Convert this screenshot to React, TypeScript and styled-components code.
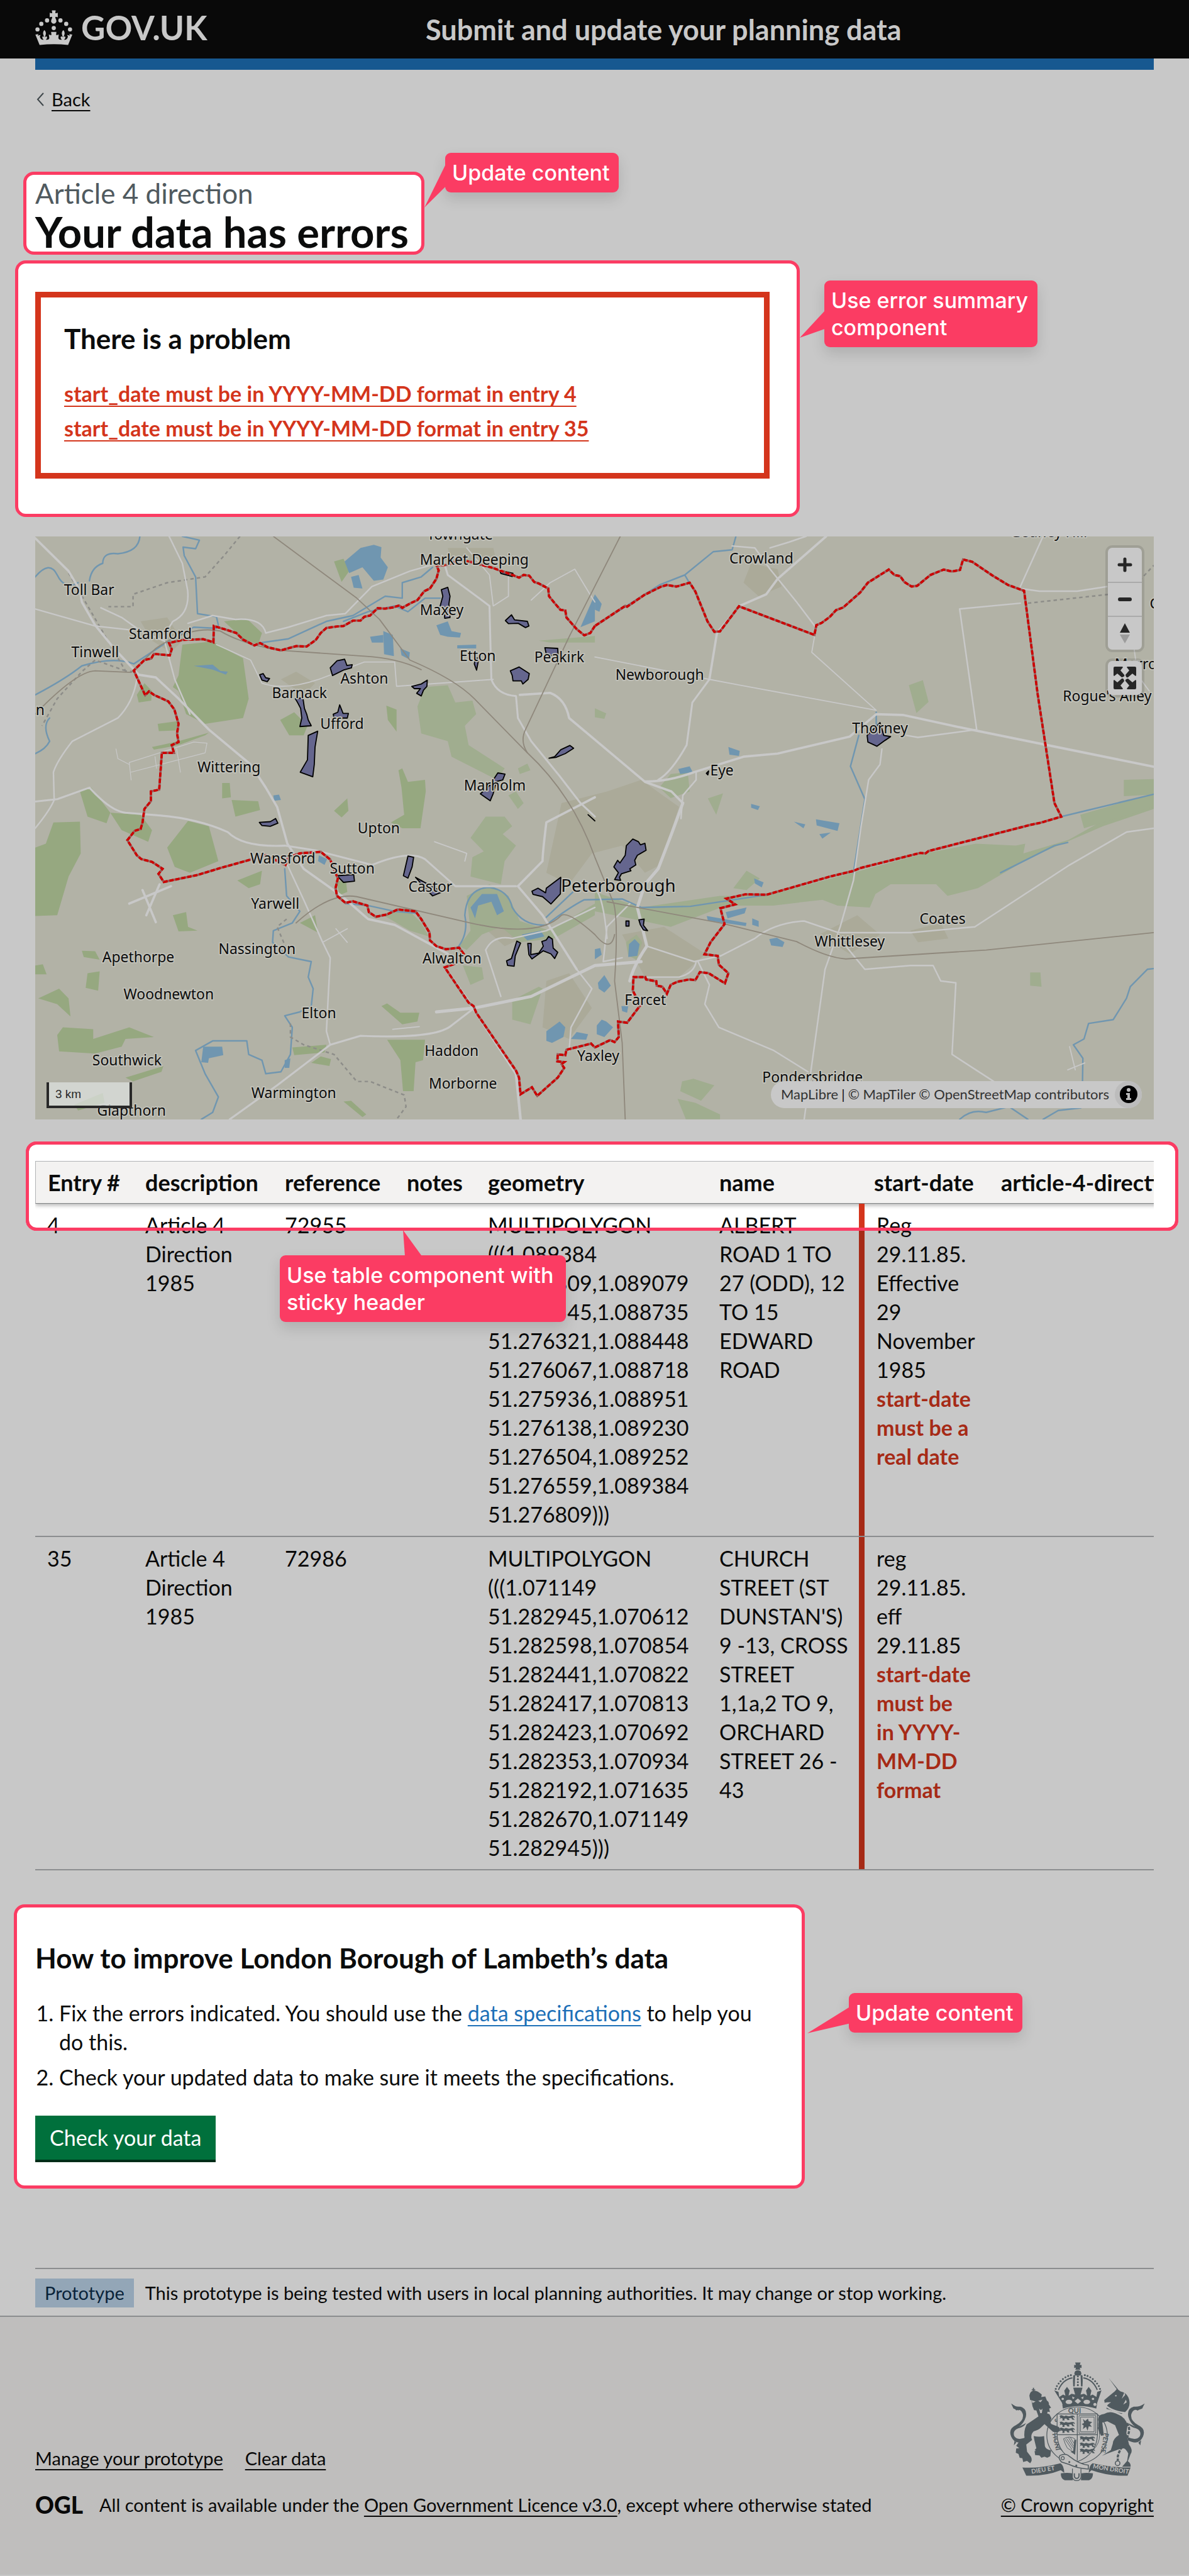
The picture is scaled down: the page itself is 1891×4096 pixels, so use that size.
import React from "react";
import styled, { createGlobalStyle } from "styled-components";

const color = {
  page: "#c8c8c8",
  ink: "#090909",
  inkBright: "#0b0c0c",
  rule: "#8b8d8f",
  footer: "#bfbebd",
  pink: "#fb3c63",
  error: "#d4351c",
  errorDim: "#a62a16",
  grey: "#505a5f",
};

const GlobalStyle = createGlobalStyle`
  * { box-sizing: border-box; }
  body {
    margin: 0;
    background: ${color.page};
    color: ${color.ink};
    font-family: Lato, "Liberation Sans", sans-serif;
    font-size: 34px;
    line-height: 46px;
  }
`;

const Container = styled.div`
  margin: 0 56px;
`;

/* ---------- Header ---------- */

const HeaderBar = styled.header`
  background: ${color.ink};
  color: ${color.page};
`;

const HeaderInner = styled(Container)`
  display: grid;
  grid-template-columns: 621px 1fr;
  align-items: center;
  height: 93px;
`;

const LogoLink = styled.a`
  display: flex;
  align-items: center;
  gap: 14px;
  padding-bottom: 6px;
  color: inherit;
  text-decoration: none;
  font-size: 53px;
  line-height: 56px;
  font-weight: 700;
`;

const ServiceName = styled.a`
  color: inherit;
  text-decoration: none;
  font-size: 45px;
  font-weight: 700;
  line-height: 56px;
`;

const BlueBar = styled(Container)`
  height: 18px;
  background: #175890;
`;

/* ---------- Shared text ---------- */

const TextLink = styled.a`
  color: inherit;
  text-decoration: underline;
  text-decoration-thickness: 2px;
  text-underline-offset: 6px;
`;

const BackRow = styled.nav`
  display: flex;
  align-items: center;
  gap: 12px;
  margin: 27px 0 96px 2px;
  font-size: 29px;
  line-height: 39px;
`;

const SectionHeading = styled.h2`
  margin: 0 0 37px;
  font-size: 44px;
  line-height: 56px;
  font-weight: 700;
`;

/* ---------- Annotations ---------- */

const Highlight = styled.section`
  position: relative;
  background: #fff;
  color: ${color.inkBright};
  border: 5px solid ${color.pink};
  border-radius: 17px;
`;

const TitleHighlight = styled(Highlight)`
  width: 638px;
  margin-left: -19px;
  padding: 0 0 0 14px;
`;

const ErrorHighlight = styled(Highlight)`
  width: 1248px;
  margin: 9px 0 31px -32px;
  padding: 45px 43px 56px 27px;
`;

const AdviceHighlight = styled(Highlight)`
  width: 1258px;
  margin: 54px 0 126px -34px;
  padding: 52px 60px 37px 29px;
`;

const Note = styled.aside<{ $left: string; $top: string; $width: number }>`
  position: absolute;
  z-index: 3;
  left: ${(p) => p.$left};
  top: ${(p) => p.$top};
  width: ${(p) => p.$width}px;
  padding: 10px 0 10px 11px;
  border-radius: 9px;
  background: ${color.pink};
  color: #fff;
  font-family: Inter, "Liberation Sans", sans-serif;
  font-size: 34px;
  font-weight: 500;
  line-height: 43px;
  box-shadow: 0 10px 22px rgba(0, 0, 0, 0.13);
`;

const SideTail = styled.i<{ $width: number; $top: number; $height: number; $shape: string }>`
  position: absolute;
  right: 100%;
  top: ${(p) => p.$top}px;
  width: ${(p) => p.$width}px;
  height: ${(p) => p.$height}px;
  background: ${color.pink};
  clip-path: polygon(${(p) => p.$shape});
`;

const TopTail = styled.i`
  position: absolute;
  left: 196px;
  bottom: 100%;
  width: 29px;
  height: 40px;
  background: ${color.pink};
  clip-path: polygon(0 0, 100% 100%, 10% 100%);
`;

/* ---------- Title and error summary ---------- */

const Caption = styled.span`
  display: block;
  color: ${color.grey};
  font-size: 44px;
  line-height: 58px;
`;

const PageTitle = styled.h1`
  margin: 0;
  font-size: 67px;
  line-height: 64px;
  font-weight: 700;
`;

const ErrorSummary = styled.div`
  border: 9px solid ${color.error};
  padding: 37px 37px 48px;
`;

const ErrorList = styled.ul`
  display: grid;
  gap: 9px;
  margin: 0;
  padding: 0;
  list-style: none;
  color: ${color.error};
  font-weight: 700;
`;

/* ---------- Map ---------- */

const MapFrame = styled.section`
  position: relative;
  margin-bottom: 66px;
  overflow: hidden;
`;

const MapSvg = styled.svg`
  display: block;
  width: 100%;
  height: auto;
  background: #b2b2a6;
`;

const MapControls = styled.div`
  position: absolute;
  top: 18px;
  right: 19px;
  display: grid;
  gap: 18px;
`;

const ControlGroup = styled.div`
  width: 54px;
  border-radius: 7px;
  background: ${color.page};
  box-shadow: 0 0 0 4px rgba(0, 0, 0, 0.1);
`;

const MapButton = styled.button`
  display: grid;
  place-items: center;
  width: 54px;
  height: 54px;
  margin: 0;
  padding: 0;
  border: 0;
  background: none;
  & + & {
    border-top: 2px solid #ababab;
  }
`;

const ScaleBar = styled.div`
  position: absolute;
  left: 18px;
  bottom: 18px;
  width: 136px;
  height: 41px;
  padding-left: 10px;
  border: 4px solid #282828;
  border-top: 0;
  background: rgba(220, 224, 222, 0.75);
  color: #282828;
  font-family: "Liberation Sans", Arial, sans-serif;
  font-size: 19px;
  line-height: 38px;
`;

const Attribution = styled.div`
  position: absolute;
  right: 19px;
  bottom: 18px;
  display: flex;
  align-items: center;
  height: 43px;
  padding-left: 16px;
  border-radius: 22px;
  background: ${color.page};
  color: #111;
  font-size: 22px;
  line-height: 30px;
  gap: 5px;
`;

const CreditLink = styled.a`
  color: #333;
  text-decoration: none;
`;

const InfoButton = styled.button`
  display: grid;
  place-items: center;
  width: 43px;
  height: 43px;
  margin-left: 4px;
  padding: 0;
  border: 0;
  border-radius: 50%;
  background: #bcbcbc;
`;

/* ---------- Table ---------- */

const TableSection = styled.section`
  position: relative;
`;

const RowHighlight = styled.div<{ $frame?: boolean }>`
  position: absolute;
  z-index: ${(p) => (p.$frame ? 2 : 0)};
  top: -31px;
  left: -15px;
  right: -39px;
  height: 142px;
  border: 5px solid ${color.pink};
  border-radius: 17px;
  background: ${(p) => (p.$frame ? "none" : "#fff")};
  pointer-events: none;
`;

const TableScroller = styled.div`
  position: relative;
  z-index: 1;
  overflow: hidden;
`;

const DataTable = styled.table`
  width: 2000px;
  table-layout: fixed;
  border-collapse: separate;
  border-spacing: 0;
  text-align: left;
`;

const HeadRow = styled.tr`
  box-shadow: 0 3px 6px rgba(0, 0, 0, 0.28);
`;

const HeadCell = styled.th<{ $wide?: boolean }>`
  padding: 10px 0 10px ${(p) => (p.$wide ? 24 : 19)}px;
  border-top: 1px solid #b1b4b6;
  border-bottom: 1px solid #808284;
  background: #f3f2f1;
  color: ${color.inkBright};
  font-size: 36px;
  font-weight: 700;
  white-space: nowrap;
  &:first-child {
    border-left: 1px solid #b1b4b6;
  }
`;

const Cell = styled.td`
  padding: 11px 0 11px 19px;
  border-bottom: 2px solid ${color.rule};
  vertical-align: top;
  white-space: pre;
`;

const ErrorCell = styled(Cell)<{ $lit?: boolean }>`
  padding-left: 28px;
  background: linear-gradient(
      ${(p) => (p.$lit ? color.error : color.errorDim)} 38px,
      ${color.errorDim} 38px
    )
    left top / 9px 100% no-repeat border-box;
`;

const CellError = styled.strong`
  display: block;
  color: ${color.errorDim};
  font-weight: 700;
`;

/* ---------- Advice ---------- */

const Steps = styled.ol`
  display: grid;
  gap: 10px;
  margin: 0 0 38px;
  padding-left: 38px;
`;

const SpecLink = styled(TextLink)`
  color: #1d70b8;
`;

const PrimaryButton = styled.button`
  display: block;
  height: 70px;
  margin-bottom: 4px;
  padding: 0 23px;
  border: 0;
  background: #00703c;
  box-shadow: 0 4px 0 #002d18;
  color: #fff;
  font: inherit;
`;

/* ---------- Phase banner and footer ---------- */

const PhaseBanner = styled.div`
  display: flex;
  align-items: center;
  gap: 18px;
  padding: 15px 0 13px;
  border-top: 2px solid ${color.rule};
  font-size: 29px;
`;

const Tag = styled.strong`
  padding: 0 15px;
  background: #93a6b7;
  color: #09233a;
  font-weight: 400;
`;

const Footer = styled.footer`
  border-top: 2px solid ${color.rule};
  background: ${color.footer};
  font-size: 29px;
  line-height: 40px;
`;

const FooterInner = styled(Container)`
  display: flex;
  justify-content: space-between;
  align-items: flex-end;
  padding: 72px 0 91px;
`;

const FooterLinks = styled.div`
  display: flex;
  gap: 35px;
  margin-bottom: 34px;
`;

const Licence = styled.div`
  display: flex;
  align-items: center;
  gap: 26px;
`;

const OglMark = styled.strong`
  width: 76px;
  font-size: 37px;
  font-weight: 900;
`;

const CopyrightLink = styled(TextLink)`
  display: grid;
  justify-items: center;
  gap: 17px;
`;

/* ---------- Drawings ---------- */

const Crown = () => (
  <svg width="59" height="56" viewBox="180 40 192 184" fill="currentColor" aria-hidden="true">
    <path d="M266 42h20l-2 14q6 2 13-2v24q-7-4-13-2q0 8 5 16a14 14 0 1 1-26 0q5-8 5-16q-6-2-13 2V54q7 4 13 2z" />
    <circle cx="276" cy="134" r="11" />
    <circle cx="241" cy="94" r="11" />
    <circle cx="311" cy="94" r="11" />
    <circle cx="211" cy="112" r="11" />
    <circle cx="341" cy="112" r="11" />
    <circle cx="191" cy="141" r="11" />
    <circle cx="361" cy="141" r="11" />
    <path d="M202 222L180 168l16-2-4 8 15-4-4 10q6 18 20 15q-12-12-3-18l6 4q-6-12-6-20q0-10 7-17q8 7 8 17q0 8-5 20l8-4q8 8-3 18q14 3 18-8l-1-6-2-14q7 5 14 3l-2-16h28l-2 16q7 2 14-3l-2 20q4 11 18 8q-11-10-3-18l8 4q-5-12-5-20q0-10 8-17q7 7 7 17q0 8-6 20l6-4q9 6-3 18q14 3 20-15l-4-10 15 4-4-8 16 2-22 54q-74-8-148 0z" />
  </svg>
);

const Beads = ({ points }: { points: number[][] }) => (
  <g>
    {points.map(([x, y]) => (
      <circle key={`${x}-${y}`} cx={x} cy={y} r="5" />
    ))}
  </g>
);

const Lions = ({ x, y }: { x: number; y: number }) => (
  <g transform={`translate(${x} ${y})`}>
    {[0, 33, 64].map((dy) => (
      <path
        key={dy}
        transform={`translate(0 ${dy})`}
        d="M2 4q8-6 14-2l10 4 8-4q14 6 24 2q10-4 18 0q6 4 4 10l-8-6q-4 4 2 10l6 6h-12l-6-9-14 1 6 8-10 2-8-9-10 2 2 8-12 1 2-9-6-4-10 4 4-7z"
      />
    ))}
  </g>
);

const RoyalArms = () => (
  <svg width="216" height="190" viewBox="100 67 700 616" fill={color.grey} role="img" aria-label="Royal arms">
    <path d="M440 69h28l-4 12q8 2 9-1v18q-4-3-9-2l3 10h-26l3-10q-5-1-9 2V80q1 3 9 1z" />
    <path d="M436 128q0-20 18-20t18 20l-6 8h-24z" />
    <path d="M430 136l10-4-2 60h-8q-2-30 0-56zM478 136l-10-4 2 60h8q2-30 0-56z" />
    <Beads points={[[454, 140], [454, 155], [454, 170], [454, 185]]} />
    <Beads points={[[418, 134], [404, 138], [390, 145], [377, 154], [365, 165], [355, 177], [346, 190], [340, 205]]} />
    <Beads points={[[490, 134], [504, 138], [518, 145], [531, 154], [543, 165], [553, 177], [562, 190], [568, 205]]} />
    <path d="M426 148q-50 8-72 62M482 148q50 8 72 62" fill="none" stroke={color.grey} strokeWidth="6" />
    <path d="M332 212l22 8 4 26 20-12 12 6-6-26 14-20 14 20-6 26 16-10 18 4-10-36h48l-10 36 18-4 16 10-6-26 14-20 14 20-6 26 12-6 20 12 4-26 22-8-22 64-5 30q-90-26-172 0l-5-30z" />
    <g fill={color.footer}>
      <path d="M454 254l17 14-17 14-17-14z" />
      <ellipse cx="408" cy="272" rx="17" ry="11" />
      <ellipse cx="500" cy="272" rx="17" ry="11" />
      <circle cx="366" cy="285" r="8" />
      <circle cx="542" cy="285" r="8" />
      <circle cx="376" cy="256" r="6" />
      <circle cx="532" cy="256" r="6" />
      <path d="M424 244l14 6-10 8zM484 244l-14 6 10 8z" />
    </g>
    <ellipse cx="450" cy="444" rx="156" ry="146" fill="none" stroke={color.grey} strokeWidth="4" />
    <ellipse cx="450" cy="444" rx="116" ry="108" fill="none" stroke={color.grey} strokeWidth="3" />
    <g fontFamily="Lato, sans-serif" fontWeight="700" fontSize="34">
      <text x="404" y="331" fontSize="36">QUI</text>
      <text transform="translate(322 436) rotate(78)">HONI</text>
      <text transform="translate(352 384) rotate(-58)">SO</text>
      <text transform="translate(590 430) rotate(100)">PENSE</text>
    </g>
    <path d="M347 334h208v110q-6 100-104 136q-98-36-104-136z" fill={color.footer} stroke={color.grey} strokeWidth="4" />
    <path d="M451 334v240M347 441h208" stroke={color.grey} strokeWidth="4" />
    <Lions x={358} y={340} />
    <Lions x={462} y={448} />
    <g fill="none" stroke={color.grey} strokeWidth="3">
      <path d="M460 342h86v92h-86zM468 350h70v76h-70z" />
      <path d="M380 462q30-18 58 0l-4 70-34-22q-12-20-20-48zM388 464l36 54M396 460l34 50M406 456l26 44M416 456l18 30" />
    </g>
    <path d="M480 360l12 10 14-12 4 14 18 4-12 10 10 14-16-2-6 22-8-20-16 12 4-18-10-8 12-6z" />
    <path d="M436 470l10-4-6 78-24-16 14-4z" />
    <g>
      <path d="M222 199h6v8h6v5h-6v10h-6v-10h-6v-5h6zM204 240q4-24 22-26t42 20l-6 28h-54zM206 256l80-12 8 20q14 10 10 20l12 18-10 4 4 18-12-2-4 18-14-6-6 22-8-14-14 8-12-34-12-2-8-20-6-36z" />
      <path d="M252 346q40-24 56-10l10 20q-10 22 0 30l30 12q16 6 14 22l-14 10-22-4-44-40-20 20q-10 10-36 18q-20 20-8 44l-30 24 4 36 20 26q10 20-4 34l-16-12-20 6-4-20-14-2-6-20-14-6 2-22 16-2-16-12 14-20 30-14q-8-40 10-76z" />
      <path d="M226 448q30 6 54 0l4 52q4 16 32 22l-4 30-16 8-14-6-16 6-10-12-22-2-4-24 10-12-10-40z" />
      <path d="M188 470q-56 30-78-20q-16-40 24-58q44-24 36-58q-10-30-34-18l-24-34q20 18 46 14q36 10 28 52q-10 34-36 52q40-20 36-18q-10 20-40 26q-30 12-20 40q18 26 62 6z" />
      <path d="M110 280l30 20 28 0-20 16-26-10zM128 470l-4 26 12-14z" />
    </g>
    <g fill={color.footer}>
      <path d="M216 264l20 6-16 8zM250 266l22-6-10 14zM254 306q10 14 18 0l-4 24h-8z" />
      <path d="M218 510l20 14-18 4z" />
    </g>
    <g>
      <path d="M614 150l48 58-8-2z" />
      <path d="M590 262l54-44 12-14 18 14q34 6 44 40q10 40-20 66l-20 10-32-14-44-12q-4-20 24-34l-20 0-14 2z" />
      <path d="M560 374q-10-36 30-40q30-20 70 2q40 16 50 56l-6 40 14 60q22 30 8 48l-14 38q16 10 14 28h-44l26-30 6-38q-16-30-28-26l-20 4-60 22-28 12 46-30 10-32q0-26 32-46l-20-50-40-20-26 6 8 66-14 2q-20-30-14-72z" />
      <path d="M712 470q56 30 78-20q16-40-24-58q-44-24-36-58q10-30 34-18l34-34q-30 18-56 14q-36 10-28 52q10 34 36 52q-40-20-36-18q10 20 40 26q30 12 20 40q-18 26-62 6z" />
      <path d="M798 280l-30 20-28 0 20 16 26-10zM780 470l-4 26-10-14z" />
    </g>
    <g fill={color.footer}>
      <circle cx="650" cy="240" r="4" />
      <path d="M694 222l-14 34 18-20zM702 260l-14 26 18-12zM602 290q40 30 94 34l-2 8q-56-6-94-32z" />
    </g>
    <path
      d="M706 382q18 20 10 50t-28 60-28 60v22"
      fill="none"
      stroke={color.grey}
      strokeWidth="11"
      strokeDasharray="16 6"
    />
    <circle cx="659" cy="588" r="12" fill="none" stroke={color.grey} strokeWidth="5" />
    <path d="M168 610q90 6 196-22q18 10 20 50l-18-14q-80 32-178 28zM726 610q-90 2-196-22q-18 10-20 50l14-14q90 32 186 28z" />
    <path d="M366 640q34-4 60 0l2 36h-42q-20-8-20-36zM532 640q-34-4-60 0l-2 36h42q20-8 20-36z" />
    <path
      d="M362 548q30-14 50 6q50 40 96 44v20q-60-4-100-24l-38-12q-20-20-8-34z"
      fill={color.footer}
      stroke={color.grey}
      strokeWidth="5"
    />
    <path d="M426 616v44q4 18 22 18t22-18v-44" fill={color.footer} stroke={color.grey} strokeWidth="4" />
    <path d="M436 640v14q2 12 12 12t12-12v-14" fill="none" stroke={color.grey} strokeWidth="6" />
    <circle cx="376" cy="562" r="8" fill="none" stroke={color.grey} strokeWidth="4" />
    <circle cx="410" cy="582" r="5" />
    <circle cx="446" cy="600" r="5" />
    <g fill={color.footer} fontFamily="Lato, sans-serif" fontWeight="700" fontSize="32">
      <text transform="translate(216 642) rotate(-9)">DIEU ET</text>
      <text transform="translate(530 614) rotate(9)">MON DROIT</text>
    </g>
  </svg>
);

type Label = [string, number, number];

const rowScale = 1.0195;

const westPlaces: Label[] = [
  ["Toll Bar", 234, 181], ["Stamford", 422, 295], ["Tinwell", 250, 343], ["n", 105, 493],
  ["Towngate", 1212, 38], ["Market Deeping", 1250, 103], ["Maxey", 1164, 233], ["Ashton", 960, 411],
  ["Barnack", 789, 449], ["Ufford", 901, 528], ["Etton", 1259, 353], ["Peakirk", 1474, 355],
  ["Wittering", 603, 640], ["Marholm", 1304, 688], ["Upton", 998, 798], ["Wansford", 745, 877],
  ["Sutton", 928, 903], ["Castor", 1134, 950], ["Yarwell", 725, 993], ["Nassington", 677, 1111],
  ["Apethorpe", 364, 1132], ["Woodnewton", 444, 1228], ["Elton", 840, 1276], ["Southwick", 334, 1399],
  ["Glapthorn", 346, 1529], ["Warmington", 774, 1483], ["Haddon", 1190, 1374], ["Morborne", 1220, 1459],
  ["Alwalton", 1191, 1135], ["Yaxley", 1577, 1387],
];

const eastPlaces: Label[] = [
  ["Crowland", 439, 101], ["Newborough", 171, 401], ["Eye", 335, 649], ["Thorney", 752, 540],
  ["Whittlesey", 672, 1091], ["Coates", 917, 1032], ["Farcet", 133, 1243], ["Pondersbridge", 574, 1442],
  ["Rogue's Alley", 1351, 456], ["Murrow", 1441, 374], ["Gedney Hill", 1197, 32],
];

const westWoods = [
  "455,420 470,390 480,310 560,302 600,325 640,345 655,450 640,500 540,515 490,490 470,430",
  "415,515 470,508 462,532 418,534", "400,575 470,560 550,538 540,545 470,570 405,582",
  "590,250 650,243 690,280 680,310 640,295", "360,440 380,410 400,430 398,455 365,460",
  "440,835 495,766 550,780 575,870 500,900 460,885", "210,690 240,680 290,745 280,772 230,755",
  "290,745 370,750 400,790 390,820 320,790", "92,835 120,825 140,770 210,768 212,850 180,910 150,1010 92,1012",
  "625,920 690,895 685,930 655,940", "610,712 680,715 685,738 620,755", "455,1010 490,1002 495,1040 520,1050 470,1052",
  "790,1030 830,1010 838,1055", "215,1102 250,1103 262,1125 220,1118", "230,1160 262,1155 258,1205 225,1198",
  "92,1140 112,1137 122,1163 92,1163", "100,1225 155,1200 180,1225 185,1272 150,1240",
  "165,1300 245,1305 245,1330 340,1300 405,1325 330,1330 320,1350 250,1368 155,1362 150,1320",
  "330,1430 430,1400 425,1415 350,1440", "880,740 915,708 918,740 900,757",
  "585,668 605,668 608,705 585,708", "738,505 775,485 810,520 800,545 762,545",
  "1018,468 1045,478 1045,535 1022,505", "880,95 905,88 920,120 900,148",
  "1050,635 1060,630 1075,665 1120,660 1122,690 1108,785 1060,785 1030,770 1065,750 1058,680",
  "1005,1245 1020,1238 1055,1262 1105,1262 1100,1285 1060,1292", "1020,1332 1120,1332 1115,1385 1095,1390 1090,1465 1062,1465 1055,1385",
  "905,1492 925,1490 965,1525 955,1532", "820,1392 845,1375 872,1382 868,1400", "770,1352 860,1345 855,1365 775,1372",
  "195,1500 270,1470 275,1495 205,1515", "885,920 912,925 915,950 895,958",
];

const westParks = [
  "1120,420 1180,415 1200,460 1245,455 1255,490 1225,520 1235,570 1330,630 1310,660 1190,600 1180,560 1110,540 1100,470",
  "1240,810 1280,755 1330,755 1350,780 1325,800 1360,830 1330,870 1320,930 1240,910 1245,860 1275,845",
  "1340,700 1360,690 1380,720 1365,735", "1365,630 1390,618 1398,635 1370,645",
  "1350,1230 1420,1195 1430,1200 1398,1292 1350,1280", "1220,1140 1270,1145 1275,1175 1240,1190",
  "1010,1010 1070,990 1110,1030 1130,1065 1080,1050", "1420,300 1568,288 1568,305 1450,305",
  "1210,1090 1240,1050 1230,960 1290,930 1340,960 1370,1025 1450,1050 1568,980 1568,1010 1460,1070 1370,1080 1320,1040 1270,1060 1230,1100",
];

const eastParks = [
  "0,950 120,990 330,960 453,960 680,900 870,850 1005,825 1110,830 1135,825 1130,850 1250,815 1340,765 1474,700 1474,735 1340,780 1150,860 1010,940 930,960 900,930 780,930 740,955 725,990 640,985 600,970 470,985 345,985 200,1040 0,1000",
  "1280,750 1474,695 1474,730 1290,785", "365,940 400,895 435,915 400,945", "170,680 200,645 245,640 250,690 200,707",
  "828,415 865,402 880,458 848,487", "0,475 30,488 25,502 0,498", "298,708 338,695 320,750",
  "230,1440 260,1433 315,1450 280,1490 225,1465", "218,1485 265,1495 330,1525 330,1538 240,1538",
  "1395,660 1474,658 1474,698 1395,702", "1148,1158 1175,1158 1178,1195 1148,1192", "82,1080 110,1060 125,1080 110,1125 88,1115",
];

const urban = [
  "1480,720 1600,690 1690,660 1790,730 1740,880 1700,900 1640,830 1560,850 1500,930 1440,900",
  "1440,1180 1500,1160 1560,1250 1500,1330 1430,1300", "1640,1060 1750,1040 1860,1110 1790,1170 1700,1170",
  "370,250 440,240 480,300 450,330 400,300", "1180,60 1300,60 1310,100 1190,100",
  "1240,1010 1330,1000 1400,1060 1330,1090", "1980,100 2050,115 2060,160 2000,185 1960,150",
  "2160,1060 2260,1010 2320,1060 2240,1110", "2400,1050 2480,1030 2500,1070 2420,1080", "740,400 780,380 830,410 800,440",
];

const westWater = [
  "908,95 950,60 985,52 1005,58 1003,85 1022,110 1010,142 985,145 955,110 920,125", "925,135 945,130 955,165 932,163",
  "1010,275 1035,285 1038,340 1012,335", "975,290 1010,285 1010,305 980,305", "1055,320 1080,330 1078,348 1058,338",
  "1150,260 1180,250 1190,275 1215,280 1212,292 1180,290 1160,285", "1240,990 1270,955 1310,955 1328,1000 1310,1010 1295,975 1260,985 1252,1018",
  "1205,312 1255,310 1255,320 1205,320", "720,700 735,698 740,712 722,714", "535,1350 585,1350 588,1372 550,1380 548,1392 530,1390",
  "1440,1310 1475,1285 1490,1300 1485,1325 1455,1340 1440,1335", "1505,1330 1520,1312 1550,1318 1545,1332",
  "1530,265 1568,180 1568,250", "1375,1060 1425,1050 1435,1065 1390,1075", "510,365 560,362 580,378 600,380 595,388 560,375",
  "750,1385 765,1380 762,1405 750,1405", "840,855 862,865 855,880 838,870",
];

const eastWater = [
  "0,180 18,205 12,225 0,220", "90,1085 105,1072 118,1085 112,1115 88,1118", "8,1185 25,1165 42,1192 25,1210 10,1200",
  "5,1295 18,1280 30,1285 48,1300 25,1325 5,1318", "0,1098 14,1095 18,1112 0,1124", "460,1072 480,1068 500,1080 495,1092 465,1088",
  "345,1002 400,990 395,1005 350,1018", "295,1012 400,1030 398,1038 298,1024", "415,1018 432,1025 432,1040 415,1035",
  "352,575 382,585 380,598 355,595", "220,632 250,625 258,640 225,645", "412,722 435,728 430,738 412,732",
  "525,768 555,775 550,785", "583,762 645,772 640,792 585,778", "592,800 622,796 600,812", "420,915 445,925 440,938 422,928",
  "70,1245 88,1245 85,1262 72,1258",
];

const westAreas = [
  "1163,168 1180,162 1186,185 1183,205 1186,240 1172,242 1170,215 1160,210 1167,185",
  "1332,248 1348,233 1356,246 1390,250 1394,262 1385,266 1366,255 1340,256",
  "1345,378 1368,368 1395,385 1392,400 1378,412 1374,404 1352,404 1350,390",
  "870,370 888,352 908,348 914,364 928,362 926,370 905,376 876,390",
  "1085,418 1110,412 1126,402 1125,418 1116,428 1110,443 1098,436 1108,424 1092,424",
  "684,388 693,385 700,396 710,398 704,406 690,402", "778,450 798,448 802,475 808,490 812,505 820,520 790,522 795,500 792,475 784,460",
  "812,545 837,534 830,575 828,620 824,652 791,640 810,608", "878,490 890,485 895,466 904,488 918,488 915,500 880,500",
  "683,770 712,768 726,760 732,772 712,780 690,778", "1447,604 1462,600 1478,582 1502,571 1512,578 1490,592 1465,602",
  "1266,696 1290,675 1312,642 1331,645 1325,660 1308,664 1300,695 1292,714", "1063,908 1075,857 1090,860 1086,885 1075,914",
  "888,908 932,905 934,922 905,925", "1402,948 1418,940 1438,952 1440,940 1478,912 1477,955 1452,981 1430,962 1405,956",
  "1335,1128 1348,1122 1362,1077 1372,1082 1358,1115 1355,1142 1338,1140",
  "1391,1083 1400,1083 1399,1112 1420,1108 1432,1090 1428,1078 1440,1074 1446,1065 1456,1072 1458,1095 1470,1106 1462,1122 1452,1110 1432,1102 1402,1123 1394,1112",
  "1317,118 1352,126 1350,134 1320,126", "1095,912 1165,950 1140,960 1120,940", "1436,318 1470,320 1472,360 1462,340 1440,335",
  "1550,750 1568,766", "1253,345 1262,345 1256,376 1250,360",
];

const eastAreas = [
  "83,830 100,813 115,820 120,828 132,824 135,842 112,855 105,868 108,880 92,890 95,895 70,903 65,912 68,920 52,918 62,900 50,885 60,868 66,875 80,855",
  "718,545 752,512 762,545 780,548 765,558 744,573 720,562", "82,1025 90,1025 90,1038 82,1038",
  "116,1022 130,1020 128,1036 139,1050 128,1048 120,1035", "294,643 300,637 298,647",
];

const roads: [string, number][] = [
  ["M92,35 L180,120 210,170 215,200 250,260 300,320 365,388 410,395 470,450 550,530 660,620 700,680 730,730 757,825 800,890 900,960 970,1020 1040,1035 1180,1110", 6],
  ["M92,218 L250,262 370,275 430,300", 4],
  ["M370,275 L320,240 265,215", 4],
  ["M92,785 Q130,740 142,712 L140,640 Q150,610 190,560 L310,500 Q350,460 360,400", 4],
  ["M92,716 L150,710 235,680 Q290,740 330,745 L420,752 Q520,760 600,795 Q640,835 750,830 L830,842 980,880 Q1080,840 1120,865 L1200,935 1360,935", 5],
  ["M445,30 L480,100 494,170 Q500,230 455,250 L430,290 460,400 500,490", 4],
  ["M495,255 L560,235 620,245 Q690,240 700,280 L760,265 860,235 910,230 980,160 1080,120 1170,95", 4],
  ["M570,310 L660,350 690,410 Q750,430 840,400 L960,355 1040,355 1045,418 1300,400", 3],
  ["M1165,80 L1180,130 1290,210 1295,400 Q1310,440 1360,443 L1365,500 1400,560 1475,650 1530,720 1568,755", 5],
  ["M1230,60 L1290,130 1300,210 1340,185 1340,130", 3],
  ["M1370,440 L1450,435 Q1490,450 1500,500 L1568,556 1700,665 1770,690 1800,720", 6],
  ["M1568,705 L1440,770 Q1430,850 1430,870 L1365,935 1430,1010 1520,1150", 6],
  ["M1150,1260 L1250,1250 1400,1220 1568,1140 1690,1130", 8],
  ["M605,1538 L730,1450 870,1345 950,1322 Q1150,1330 1190,1295 L1250,1250", 5],
  ["M757,880 L800,970 850,1080 870,1120 860,1310 870,1345", 4],
  ["M1172,1145 L1240,1240 1360,1420 1372,1538", 7],
  ["M1280,1100 L1320,1220 M1280,1100 Q1300,1060 1350,1070 L1440,1050 1568,990", 4],
  ["M1500,1360 L1505,1300 1560,1200 1520,1150", 4],
  ["M340,980 L450,935 M375,945 L410,1028 M420,930 L385,1010", 6],
  ["M850,1080 L915,1045 M885,1045 L915,1080 M1145,820 L1230,850 1225,870 M1035,1305 L1105,1298", 3],
  ["M345,640 L540,590 545,565 510,562 340,615 345,660 M305,580 L310,605 340,620 M408,600 L412,630 M465,580 L475,640", 2],
  ["M1400,195 L1450,150 1515,115 1555,180 1568,200", 3],
  ["M1640,1120 L1590,1130 1600,1040 1660,980 M1568,940 Q1590,960 1600,1070", 4],
  ["M1700,664 Q1760,665 1830,640 L1960,600 2050,592 2240,548 2310,490 2380,492 2550,528 3042,626", 6],
  ["M1568,342 L1870,400 1950,415 2310,480 2140,330 2148,285", 3],
  ["M1870,400 L1890,280 1950,210 2020,180 2050,140 2178,30", 6],
  ["M1870,400 L1825,460 1810,570 Q1770,640 1735,660", 5],
  ["M2148,262 L2100,200 2030,115 1990,60 1930,55 M2030,60 L2080,45 2125,30", 4],
  ["M1800,720 L1770,800 1735,890 1700,930 1680,990 1705,1090 Q1670,1140 1660,1180", 8],
  ["M1835,640 L1835,660 1800,700 1795,760", 4],
  ["M2530,218 L2690,203 M2530,218 L2575,530 2420,550 2390,545", 4],
  ["M2690,160 L2750,30 M2690,165 L2740,172 2840,172 2918,160", 4],
  ["M2325,580 L2320,620 2290,660 2270,780 2250,920 2215,1040 2175,1150 2120,1538", 4],
  ["M1705,1090 L1830,1130 1900,1115 1990,1070 Q2040,1030 2120,1025 L2210,1055 2400,1055 2570,1040 2820,880 2970,795 3042,785", 4],
  ["M2230,1090 L2280,1150 2400,1140 2460,1140 2480,1180 2520,1185 2510,1370 2620,1440", 4],
  ["M1840,1130 L1870,1190 1858,1240 1895,1300 2040,1360 2130,1415", 4],
  ["M1690,1170 L1790,1170 Q1830,1160 1835,1130", 4],
  ["M2820,1350 L2835,1410 M2815,1410 L2860,1392 M2990,320 L3000,390 3030,430", 3],
];

const rivers = [
  "M92,135 Q130,90 150,130 T205,150 M235,145 Q240,110 270,100 Q270,70 310,75 Q365,70 368,30",
  "M480,30 L525,40 515,62 482,58 485,80 515,135 520,230 570,238 575,260",
  "M92,440 Q170,400 215,365 Q300,340 352,360 L445,300 510,265 570,268",
  "M130,500 Q110,520 130,560 Q120,580 92,592",
  "M690,305 L760,295 860,250 930,235 1015,185 1060,190 1060,150 1110,135 1140,110",
  "M905,250 L970,225 1040,210 1075,225 1120,190 1160,190",
  "M910,980 L970,985 1040,1000 1100,1005",
  "M1205,1095 Q1235,1060 1225,1010 Q1230,940 1290,938 Q1340,945 1350,990 Q1380,1040 1440,1035 Q1500,990 1540,970 L1640,968 1690,990 1820,987 2020,957",
  "M1440,1015 L1510,950 M750,890 L755,960 790,1000 770,1030 720,1050 718,1080 760,1118 820,1130 812,1170 825,1200 820,1245 790,1260 750,1270 770,1300 765,1370 740,1415 700,1420 690,1385 655,1370 650,1335 560,1335 515,1360 540,1420 575,1480 560,1520 530,1538",
  "M1568,262 L1740,155 1805,130 1880,70 1930,65 1940,30 M1805,130 L1820,155",
  "M2310,485 L2310,530 M2264,545 L2242,625 2280,710 2250,900",
  "M2798,755 L3042,697 M2638,900 L2780,830 2815,822",
  "M2854,1440 L2855,1380 2830,1345 2858,1330 2870,1290 2935,1280 2970,1225 2980,1195 3025,1150 3042,1148",
  "M2530,1538 Q2560,1510 2600,1520 L2660,1505 2710,1538 M2750,1538 L2790,1515 2850,1508",
];

const railways = [
  "M720,30 L940,190 1000,245 1080,350 Q1200,400 1250,450 L1390,590 Q1510,700 1568,860 L1618,980 Q1630,1030 1620,1180 L1640,1340 1648,1538",
  "M1390,590 Q1370,560 1385,530 L1500,290 1635,30",
  "M92,490 Q200,380 250,378 L345,382 410,320 Q500,260 580,275 Q640,310 740,325 L960,340 Q1050,345 1110,375",
  "M780,1030 Q870,950 940,962 L1240,1030 Q1420,1070 1480,1010 Q1500,1000 1568,1060 Q1610,1110 1620,1060",
  "M1600,975 L1680,990 1900,1030 2100,1078 Q2180,1120 2230,1123 L2600,1100 3042,1055",
];

const borders = [
  "M632,30 L590,80 540,135 440,150 350,180 350,212 285,212",
  "M180,125 L260,260 330,378 352,380 M330,378 L250,350 215,380 150,450 110,520",
  "M755,1020 L730,1040 760,1110 M765,1290 L765,1325 800,1345 880,1370 940,1440 975,1440 1065,1475 1070,1505 1045,1538",
  "M2710,203 L2925,180 2985,165 3042,105",
];

const boundary =
  "M1568,262 L1556,280 1540,286 1520,270 1493,240 1490,222 1477,220 1462,203 1447,185 1445,165 1420,152 1408,148 1395,132 1380,130 1368,137 1353,131 1300,112 1240,96 1210,92 1180,104 1150,105 1156,118 1150,140 1133,165 1118,172 1100,195 1082,203 1060,215 1052,209 1035,214 1015,217 995,216 975,235 960,238 950,248 930,248 905,262 890,263 860,267 845,280 832,298 808,315 780,314 740,325 705,317 685,306 670,312 640,297 622,280 590,270 563,262 562,304 535,296 480,298 445,306 452,322 447,338 405,334 398,346 380,350 352,377 365,405 382,441 392,431 405,440 443,457 459,478 470,515 466,540 470,562 452,570 458,590 426,590 419,685 397,690 397,715 380,735 375,770 370,787 354,792 335,816 360,855 372,865 400,872 428,890 417,903 431,924 520,906 580,888 657,867 700,855 752,880 760,860 790,850 845,846 870,866 890,915 884,940 888,960 910,978 930,974 968,985 972,1002 990,1014 1020,1008 1048,995 1095,1000 1110,1020 1132,1055 1133,1075 1150,1090 1175,1098 1210,1094 1222,1110 1200,1135 1172,1145 1235,1236 1248,1245 1255,1262 1360,1412 1368,1430 1372,1473 1402,1455 1416,1477 1470,1430 1487,1405 1480,1395 1487,1390 1469,1388 1470,1370 1490,1372 1493,1358 1558,1342 1568,1352 1608,1333 1620,1338 1631,1325 1629,1285 1653,1288 1688,1243 1668,1205 1670,1170 1701,1170 1703,1176 1730,1181 1731,1192 1746,1195 1758,1213 1768,1190 1786,1182 1818,1176 1833,1178 1845,1157 1868,1160 1911,1186 1920,1160 1895,1138 1892,1115 1857,1111 1873,1080 1910,1033 1899,992 1938,982 1915,967 1965,956 2021,957 2188,910 2248,896 2268,888 2426,849 2440,850 2448,844 2718,776 2743,771 2798,755 2780,720 2736,440 2700,171 2658,156 2616,131 2563,96 2539,90 2531,117 2510,121 2488,116 2453,130 2418,158 2403,160 2384,148 2373,133 2358,130 2343,116 2288,150 2268,175 2223,214 2204,221 2188,238 2166,254 2152,260 2147,285 1948,211 1898,276 1883,277 1865,250 1833,173 1818,150 1783,160 1758,156 1743,160 1698,182 1653,212 1648,210z";

const Polygons = ({ items, fill, east }: { items: string[]; fill: string; east?: boolean }) => (
  <g fill={fill} transform={east ? "translate(1568 0)" : undefined}>
    {items.map((points) => (
      <polygon key={points} points={points} />
    ))}
  </g>
);

const Places = ({ items }: { items: Label[] }) => (
  <>
    {items.map(([name, x, y]) => (
      <text key={name} x={x} y={y * rowScale}>
        {name}
      </text>
    ))}
  </>
);

const AreaMap = () => (
  <MapSvg viewBox="92 31 2950 1537" role="img" aria-label="Map of entries around Peterborough">
    <g transform={`scale(1 ${rowScale})`}>
      <Polygons items={urban} fill="#abaa99" />
      <Polygons items={westWoods} fill="#96a880" />
      <Polygons items={westParks} fill="#a0ad8f" />
      <Polygons items={eastParks} fill="#a0ad8f" east />
      <Polygons items={westWater} fill="#7096b0" />
      <Polygons items={eastWater} fill="#7096b0" east />
      <g fill="none" strokeLinejoin="round" strokeLinecap="round">
        {rivers.map((d) => (
          <path key={d} d={d} stroke="#7096b0" strokeWidth="4" />
        ))}
        {borders.map((d) => (
          <path key={d} d={d} stroke="#8d8d89" strokeWidth="4" strokeDasharray="9 8" strokeLinecap="butt" />
        ))}
        {roads.map(([d, width]) => (
          <path key={d} d={d} stroke="#c8c8c8" strokeWidth={width} />
        ))}
        {railways.map((d) => (
          <path key={d} d={d} stroke="#8f887c" strokeWidth="3" />
        ))}
      </g>
      <g stroke="#000" strokeWidth="3" strokeLinejoin="round">
        <Polygons items={westAreas} fill="#65668e" />
        <Polygons items={eastAreas} fill="#65668e" east />
      </g>
      <path d={boundary} fill="none" stroke="#9c5a58" strokeWidth="6" />
      <path d={boundary} fill="none" stroke="#cc0000" strokeWidth="6" strokeDasharray="11 5" />
    </g>
    <g
      fill="#0c0c0c"
      stroke="#c2c2ba"
      strokeWidth="6"
      strokeLinejoin="round"
      paintOrder="stroke"
      textAnchor="middle"
      fontFamily='"Noto Sans", sans-serif'
      fontSize="38"
    >
      <Places items={westPlaces} />
      <text x="1630" y={950 * rowScale} fontSize="46">
        Peterborough
      </text>
      <g transform="translate(1568 0)">
        <Places items={eastPlaces} />
        <text x="1477" y="222">
          G
        </text>
      </g>
    </g>
  </MapSvg>
);

const PlusIcon = () => (
  <svg width="24" height="24" viewBox="0 0 24 24" stroke="#262626" strokeWidth="5" strokeLinecap="round" aria-hidden="true">
    <path d="M12 3v18M3 12h18" />
  </svg>
);

const MinusIcon = () => (
  <svg width="24" height="24" viewBox="0 0 24 24" stroke="#262626" strokeWidth="6" strokeLinecap="round" aria-hidden="true">
    <path d="M4 12h16" />
  </svg>
);

const CompassIcon = () => (
  <svg width="16" height="32" viewBox="0 0 16 32" aria-hidden="true">
    <path d="M8 0l8 15H0z" fill="#262626" />
    <path d="M8 32l8-14H0z" fill="#9c9c9c" />
  </svg>
);

const FullscreenIcon = () => (
  <svg width="36" height="36" viewBox="0 0 36 36" fill="#262626" aria-hidden="true">
    {[0, 90, 180, 270].map((angle) => (
      <path
        key={angle}
        transform={`rotate(${angle} 18 18)`}
        d="M2 0h12l1 1-4 5 6 7q1 2-1 3t-3 1L6 11l-5 4-1-1V2q0-2 2-2z"
      />
    ))}
  </svg>
);

const InfoIcon = () => (
  <svg width="28" height="28" viewBox="0 0 28 28" aria-hidden="true">
    <circle cx="14" cy="14" r="14" fill="#000" />
    <circle cx="14" cy="7" r="3" fill="#bcbcbc" />
    <path d="M10 12h6v8h2v3h-8v-3h2v-5h-2z" fill="#bcbcbc" />
  </svg>
);

/* ---------- Data ---------- */

const columns = [
  { name: "Entry #", width: 156 },
  { name: "description", width: 222 },
  { name: "reference", width: 194 },
  { name: "notes", width: 129 },
  { name: "geometry", width: 368 },
  { name: "name", width: 241 },
  { name: "start-date", width: 202, wide: true },
  { name: "article-4-direction", width: 488, wide: true },
];

const rows = [
  {
    entry: "4",
    reference: "72955",
    geometry:
      "MULTIPOLYGON\n(((1.089384\n51.276809,1.089079\n51.276545,1.088735\n51.276321,1.088448\n51.276067,1.088718\n51.275936,1.088951\n51.276138,1.089230\n51.276504,1.089252\n51.276559,1.089384\n51.276809)))",
    name: "ALBERT\nROAD 1 TO\n27 (ODD), 12\nTO 15\nEDWARD\nROAD",
    date: "Reg\n29.11.85.\nEffective\n29\nNovember\n1985",
    error: "start-date\nmust be a\nreal date",
    lit: true,
  },
  {
    entry: "35",
    reference: "72986",
    geometry:
      "MULTIPOLYGON\n(((1.071149\n51.282945,1.070612\n51.282598,1.070854\n51.282441,1.070822\n51.282417,1.070813\n51.282423,1.070692\n51.282353,1.070934\n51.282192,1.071635\n51.282670,1.071149\n51.282945)))",
    name: "CHURCH\nSTREET (ST\nDUNSTAN'S)\n9 -13, CROSS\nSTREET\n1,1a,2 TO 9,\nORCHARD\nSTREET 26 -\n43",
    date: "reg\n29.11.85.\neff\n29.11.85",
    error: "start-date\nmust be\nin YYYY-\nMM-DD\nformat",
    lit: false,
  },
];

export default function App() {
  return (
    <>
      <GlobalStyle />
      <HeaderBar>
        <HeaderInner>
          <LogoLink href="#">
            <Crown />
            GOV.UK
          </LogoLink>
          <ServiceName href="#">Submit and update your planning data</ServiceName>
        </HeaderInner>
      </HeaderBar>
      <BlueBar />

      <Container as="main">
        <BackRow>
          <svg width="12" height="22" viewBox="0 0 12 22" fill="none" stroke="#3f474b" strokeWidth="2" aria-hidden="true">
            <path d="M11 1L2 11l9 10" />
          </svg>
          <TextLink href="#">Back</TextLink>
        </BackRow>

        <TitleHighlight>
          <Caption>Article 4 direction</Caption>
          <PageTitle>Your data has errors</PageTitle>
          <Note $left="calc(100% + 38px)" $top="-35px" $width={276}>
            Update content
            <SideTail $width={33} $top={20} $height={67} $shape="100% 0, 100% 51%, 0 100%" />
          </Note>
        </TitleHighlight>

        <ErrorHighlight>
          <ErrorSummary role="alert">
            <SectionHeading>There is a problem</SectionHeading>
            <ErrorList>
              <li>
                <TextLink href="#entry-4">start_date must be in YYYY-MM-DD format in entry 4</TextLink>
              </li>
              <li>
                <TextLink href="#entry-35">start_date must be in YYYY-MM-DD format in entry 35</TextLink>
              </li>
            </ErrorList>
          </ErrorSummary>
          <Note $left="calc(100% + 44px)" $top="27px" $width={339}>
            Use error summary component
            <SideTail $width={39} $top={49} $height={42} $shape="100% 0, 100% 67%, 0 100%" />
          </Note>
        </ErrorHighlight>

        <MapFrame>
          <AreaMap />
          <MapControls>
            <ControlGroup>
              <MapButton aria-label="Zoom in"><PlusIcon /></MapButton>
              <MapButton aria-label="Zoom out"><MinusIcon /></MapButton>
              <MapButton aria-label="Reset bearing to north"><CompassIcon /></MapButton>
            </ControlGroup>
            <ControlGroup>
              <MapButton aria-label="Enter fullscreen"><FullscreenIcon /></MapButton>
            </ControlGroup>
          </MapControls>
          <ScaleBar>3 km</ScaleBar>
          <Attribution>
            <CreditLink href="#">MapLibre</CreditLink>
            <span>|</span>
            <CreditLink href="#">© MapTiler</CreditLink>
            <CreditLink href="#">© OpenStreetMap contributors</CreditLink>
            <InfoButton aria-label="Toggle attribution"><InfoIcon /></InfoButton>
          </Attribution>
        </MapFrame>

        <TableSection>
          <RowHighlight />
          <TableScroller>
            <DataTable>
              <colgroup>
                {columns.map((column) => (
                  <col key={column.name} width={column.width} />
                ))}
              </colgroup>
              <thead>
                <HeadRow>
                  {columns.map((column) => (
                    <HeadCell key={column.name} scope="col" $wide={column.wide}>
                      {column.name}
                    </HeadCell>
                  ))}
                </HeadRow>
              </thead>
              <tbody>
                {rows.map((row) => (
                  <tr key={row.entry} id={`entry-${row.entry}`}>
                    <Cell>{row.entry}</Cell>
                    <Cell>{"Article 4\nDirection\n1985"}</Cell>
                    <Cell>{row.reference}</Cell>
                    <Cell />
                    <Cell>{row.geometry}</Cell>
                    <Cell>{row.name}</Cell>
                    <ErrorCell $lit={row.lit}>
                      {row.date}
                      <CellError>{row.error}</CellError>
                    </ErrorCell>
                    <Cell />
                  </tr>
                ))}
              </tbody>
            </DataTable>
          </TableScroller>
          <RowHighlight $frame />
          <Note $left="389px" $top="150px" $width={455}>
            Use table component with sticky header
            <TopTail />
          </Note>
        </TableSection>

        <AdviceHighlight>
          <SectionHeading>How to improve London Borough of Lambeth’s data</SectionHeading>
          <Steps>
            <li>
              Fix the errors indicated. You should use the <SpecLink href="#">data specifications</SpecLink> to help you
              do this.
            </li>
            <li>Check your updated data to make sure it meets the specifications.</li>
          </Steps>
          <PrimaryButton type="button">Check your data</PrimaryButton>
          <Note $left="calc(100% + 75px)" $top="136px" $width={276}>
            Update content
            <SideTail $width={66} $top={23} $height={41} $shape="100% 0, 100% 63%, 0 100%" />
          </Note>
        </AdviceHighlight>

        <PhaseBanner>
          <Tag>Prototype</Tag>
          <span>This prototype is being tested with users in local planning authorities. It may change or stop working.</span>
        </PhaseBanner>
      </Container>

      <Footer>
        <FooterInner>
          <div>
            <FooterLinks>
              <TextLink href="#">Manage your prototype</TextLink>
              <TextLink href="#">Clear data</TextLink>
            </FooterLinks>
            <Licence>
              <OglMark>OGL</OglMark>
              <span>
                All content is available under the <TextLink href="#">Open Government Licence v3.0</TextLink>, except where
                otherwise stated
              </span>
            </Licence>
          </div>
          <CopyrightLink href="#">
            <RoyalArms />
            <span>© Crown copyright</span>
          </CopyrightLink>
        </FooterInner>
      </Footer>
    </>
  );
}
